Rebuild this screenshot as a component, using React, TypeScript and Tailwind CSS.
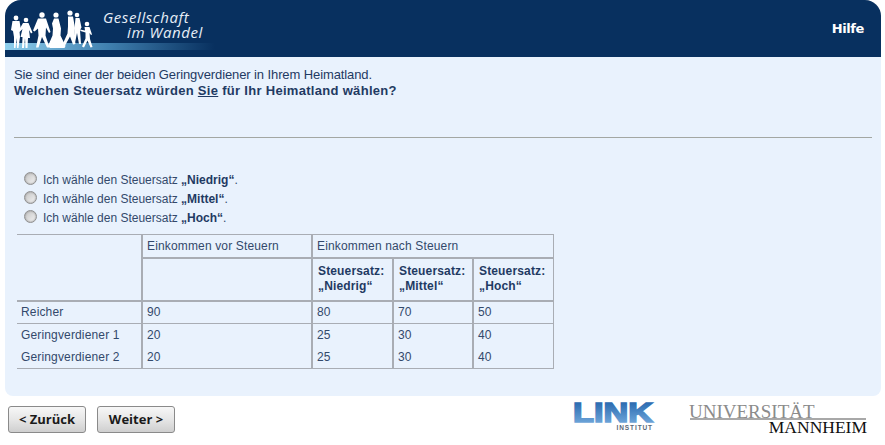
const rows = [
  ["Reicher", "90", "80", "70", "50"],
  ["Geringverdiener 1", "20", "25", "30", "40"],
  ["Geringverdiener 2", "20", "25", "30", "40"],
];

const options = ["Niedrig", "Mittel", "Hoch"];

// drawn in page coordinates, the header starts at x=5
const Family = () => (
  <svg width="100" height="57" viewBox="0 0 100 57" className="absolute left-[-5px] top-0" fill="#fff">
    <circle cx="16" cy="18" r="2.400" />
    <path d="M12.500 21h7l1.500 9-1.500 1 .5 6-1.500 11h-1.500l-.5-10-1 10h-1.500l0-11-1-6-2-1z" />
    <circle cx="26" cy="20" r="2.300" />
    <path d="M23 23h5.500l4 9.500-1.500 1-2-3.500 1 8h-2l-.5 10h-2l-.5-10-1 10h-2l.5-11h-2l2-8-3 3-1-1z" />
    <circle cx="42" cy="15" r="2.700" />
    <path d="M38 18.500h8l4.500 13.500-1.500 1-3-5.500-.5 8 4 12h-2.500l-5-10.500-3.500 10.500h-2.500l2.500-12-.5-7-3.500 3-1.500-1z" />
    <circle cx="56" cy="15" r="2.600" />
    <path d="M54 18.500h4.500l2.500 10-.5 7 5 10.500-1 2H50l-2-2 4.500-10.500.5-7-1-5z" />
    <circle cx="70" cy="13" r="2.600" />
    <path d="M68 16.500h5l2 11.500-1 8 1.500 8-2.500.5-3-8-5.500 10-2.500-1 5.500-12 .5-7z" />
    <circle cx="77" cy="15" r="2.300" />
    <path d="M75.500 18h4l2 9.500-1.500 2.500 1 14h-2l-2-11-2 10-1.500-.5 1-14z" />
    <circle cx="87" cy="24" r="2.300" />
    <path d="M84.500 27h5l2.500 7.500-1 .5-1.500-2 .5 6 2.500 8-2 .5-3-7-3.500 7-2-1 3.500-8v-6l-5-1.500-.5-1.500 5 1z" />
  </svg>
);

const LinkLogo = () => (
  <svg width="84" height="32" viewBox="0 0 84 32">
    <defs>
      <linearGradient id="linkFill" x1="0" y1="0" x2="0" y2="1">
        <stop offset="0" stopColor="#1d5fa8" />
        <stop offset="1" stopColor="#7db2e2" />
      </linearGradient>
    </defs>
    <text
      x="1"
      y="21"
      textLength="80"
      lengthAdjust="spacingAndGlyphs"
      fontFamily="'Liberation Sans', sans-serif"
      fontWeight="700"
      fontSize="27"
      fill="url(#linkFill)"
      stroke="url(#linkFill)"
      strokeWidth="1.600"
    >
      LINK
    </text>
    <text x="81" y="29" textAnchor="end" fontFamily="'Liberation Sans', sans-serif" fontWeight="700" fontSize="6.500" letterSpacing="0.900" fill="#5a6878">
      INSTITUT
    </text>
  </svg>
);

const UniLogo = () => (
  <div className="relative w-[180px] h-[36px] font-['Liberation_Serif',serif]">
    <div className="absolute left-0 top-0 text-[19px] leading-[24px] text-[#8b8b8b] whitespace-nowrap">UNIVERSITÄT</div>
    <div className="absolute left-[1px] top-[18px] w-[176px] h-[2px] bg-[#a8a8a8]" />
    <div className="absolute right-[2px] top-[16px] text-[17.500px] leading-[22px] text-[#111] whitespace-nowrap">MANNHEIM</div>
  </div>
);

const Button = ({ label }: { label: string }) => (
  <button className="w-[78px] h-[27px] rounded-[3px] border border-[#8a8a8a] bg-gradient-to-b from-[#f7f7f7] via-[#e6e6e6] to-[#cfcfcf] text-[13px] font-bold text-[#1a1a1a] font-['Open_Sans',sans-serif]">
    {label}
  </button>
);

const th = "border border-[#a9adb4] px-[4px] align-middle text-left";

export default function App() {
  return (
    <div className="w-[885px] h-[445px] bg-white px-[5px] font-['Liberation_Sans',sans-serif] text-[12px] text-[#1f3a63] overflow-hidden">
      <header className="relative w-[876px] h-[57px] rounded-tl-[16px] rounded-tr-[16px] bg-[#08305f] flex items-center justify-end overflow-hidden">
        <div className="absolute left-0 top-[43px] w-[210px] h-[7px] bg-gradient-to-r from-[#8fd0ee] via-[#3f7fae] to-[#08305f]" />
        <Family />
        <div className="absolute left-[98px] top-[10px] text-[15px] leading-[15px] italic tracking-[0.6px] text-[#e6eef7] font-['Open_Sans',sans-serif]">
          <div>Gesellschaft</div>
          <div className="pl-[24px]">im Wandel</div>
        </div>
        <span className="mr-[17px] text-[13px] font-bold text-white font-['DejaVu_Sans',sans-serif] tracking-[-0.4px]">Hilfe</span>
      </header>

      <main className="w-[876px] h-[339px] rounded-b-[8px] bg-[#e9f2fd] pl-[9px] pr-[10px] pt-[11px]">
        <p className="text-[13px] leading-[14px] tracking-[-0.1px]">Sie sind einer der beiden Geringverdiener in Ihrem Heimatland.</p>
        <p className="mt-[1px] text-[13px] leading-[15px] font-bold tracking-[0.3px]">
          Welchen Steuersatz würden <span className="underline">Sie</span> für Ihr Heimatland wählen?
        </p>
        <div className="h-px bg-[#a3a7a3] mt-[39px] mr-[-1px]" />

        <div className="mt-[35px] ml-[10px] flex flex-col gap-[5px]">
          {options.map((o) => (
            <label key={o} className="flex items-center h-[14px] gap-[6px] text-[#33496b]">
              <span className="w-[13px] h-[13px] -mt-[3px] rounded-full border border-[#8f8f8f] bg-gradient-to-br from-[#c4c4c4] to-[#f4f4f4] shadow-[inset_0_0_2px_#888]" />
              <span>
                Ich wähle den Steuersatz <b className="text-[#1f3a63]">„{o}“</b>.
              </span>
            </label>
          ))}
        </div>

        <table className="mt-[9px] ml-[3px] w-[536px] table-fixed border-collapse tracking-[0.15px]">
          <colgroup>
            <col className="w-[125px]" />
            <col className="w-[170px]" />
            <col className="w-[81px]" />
            <col className="w-[80px]" />
            <col className="w-[80px]" />
          </colgroup>
          <thead>
            <tr className="h-[23px]">
              <th rowSpan={2} className={`${th} font-normal border-l-0 border-r-2`} />
              <th className={`${th} font-normal text-[#33496b] border-r-2 border-b-2`}>Einkommen vor Steuern</th>
              <th colSpan={3} className={`${th} font-normal text-[#33496b] border-b-2`}>Einkommen nach Steuern</th>
            </tr>
            <tr className="h-[43px]">
              <th className={`${th} font-normal border-r-2`} />
              {options.map((s) => (
                <th key={s} className={`${th} border-r-2 last:border-r font-bold leading-[15px] px-[5px]`}>
                  Steuersatz:
                  <br />„{s}“
                </th>
              ))}
            </tr>
          </thead>
          <tbody>
            {rows.map((r, i) => (
              <tr key={r[0]} className={i === 0 ? "h-[23px]" : "h-[22.5px]"}>
                {r.map((c, j) => (
                  <td
                    key={j}
                    className={`px-[4px] border-[#a9adb4] border-r-2 last:border-r ${i === 0 ? "border-t-2 border-b" : ""} ${i === 2 ? "border-b" : ""} text-[#33496b]`}
                  >
                    {c}
                  </td>
                ))}
              </tr>
            ))}
          </tbody>
        </table>
      </main>

      <footer className="flex items-start w-[876px] pt-[10px]">
        <div className="ml-[3px] flex gap-[11px]">
          <Button label="< Zurück" />
          <Button label="Weiter >" />
        </div>
        <div className="ml-auto mr-[12px] -mt-[5px] flex gap-[33px] items-start">
          <LinkLogo />
          <div className="-mt-[1px]">
            <UniLogo />
          </div>
        </div>
      </footer>
    </div>
  );
}
